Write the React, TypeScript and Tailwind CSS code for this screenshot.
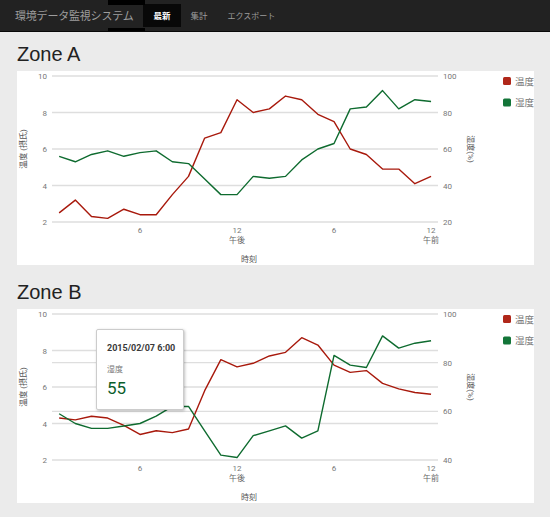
import React from 'react';

const RED = '#a8190c';
const GREEN = '#0e6b2f';
const FONT = "Roboto, 'Noto Sans CJK JP', sans-serif";

type Series = { left: number[]; right: number[]; rightMin: number; rightTicks: number[] };

const zoneA: Series = {
  left: [2.5, 3.2, 2.3, 2.2, 2.7, 2.4, 2.4, 3.5, 4.5, 6.6, 6.9, 8.7, 8.0, 8.2, 8.9, 8.7, 7.9, 7.5, 6.0, 5.7, 4.9, 4.9, 4.1, 4.5],
  right: [56, 53, 57, 59, 56, 58, 59, 53, 52, 43.5, 35, 35, 45, 44, 45, 54, 60, 63, 82, 83, 92, 82, 87, 86],
  rightMin: 20,
  rightTicks: [100, 80, 60, 40, 20],
};

const zoneB: Series = {
  left: [4.3, 4.2, 4.4, 4.3, 3.9, 3.4, 3.6, 3.5, 3.7, 5.8, 7.5, 7.1, 7.3, 7.7, 7.9, 8.7, 8.3, 7.2, 6.8, 6.9, 6.2, 5.9, 5.7, 5.6],
  right: [59, 55, 53, 53, 54, 55, 58, 62, 62, 52, 42, 41, 50, 52, 54, 49, 52, 83, 79, 78, 91, 86, 88, 89],
  rightMin: 40,
  rightTicks: [100, 80, 60, 40],
};

const TOP = 5;
const BOTTOM = 151;
const xAt = (h: number) => 123 + (h - 6) * 16.17;

function Chart({ data }: { data: Series }) {
  const leftY = (v: number) => BOTTOM - ((v - 2) / 8) * (BOTTOM - TOP);
  const rightY = (v: number) => BOTTOM - ((v - data.rightMin) / (100 - data.rightMin)) * (BOTTOM - TOP);
  const leftTicks = [10, 8, 6, 4, 2];
  const gridYs = Array.from(new Set([...leftTicks.map(leftY), ...data.rightTicks.map(rightY)].map((y) => Math.round(y * 10) / 10)));
  const redPts = data.left.map((v, i) => `${xAt(i + 1)},${leftY(v)}`).join(' ');
  const greenPts = data.right.map((v, i) => `${xAt(i + 1)},${rightY(v)}`).join(' ');

  return (
    <svg width="517" height="194" viewBox="0 0 517 194" fontFamily={FONT}>
      {gridYs.map((y) => (
        <line key={y} x1="35" x2="421" y1={y} y2={y} stroke="#dedede" strokeWidth="1.3" />
      ))}
      {leftTicks.map((t) => (
        <text key={t} x="30" y={leftY(t) + 3} fontSize="8" fill="#777" textAnchor="end">{t}</text>
      ))}
      {data.rightTicks.map((t) => (
        <text key={t} x="426" y={rightY(t) + 3} fontSize="8" fill="#777">{t}</text>
      ))}
      <text x="123" y="162" fontSize="8" fill="#777" textAnchor="middle">6</text>
      <text x="220" y="162" fontSize="8" fill="#777" textAnchor="middle">12</text>
      <text x="220" y="172" fontSize="8" fill="#666" textAnchor="middle">午後</text>
      <text x="317" y="162" fontSize="8" fill="#777" textAnchor="middle">6</text>
      <text x="414" y="162" fontSize="8" fill="#777" textAnchor="middle">12</text>
      <text x="414" y="172" fontSize="8" fill="#666" textAnchor="middle">午前</text>
      <text x="232" y="191" fontSize="8" fill="#555" textAnchor="middle">時刻</text>
      <text x="9" y="78" fontSize="8" fill="#555" textAnchor="middle" transform="rotate(-90 9 78)">温度 (摂氏)</text>
      <text x="451" y="78" fontSize="8" fill="#555" textAnchor="middle" transform="rotate(90 451 78)">湿度(%)</text>
      <polyline points={redPts} fill="none" stroke={RED} strokeWidth="1.4" strokeLinejoin="round" />
      <polyline points={greenPts} fill="none" stroke={GREEN} strokeWidth="1.4" strokeLinejoin="round" />
      <rect x="486" y="6" width="8" height="8" rx="1.5" fill="#b0271a" />
      <text x="498" y="13.5" fontSize="9.5" fill="#777">温度</text>
      <rect x="486" y="27.5" width="8" height="8" rx="1.5" fill="#137538" />
      <text x="498" y="35" fontSize="9.5" fill="#777">湿度</text>
    </svg>
  );
}

function Section({ title, data, tooltip }: { title: string; data: Series; tooltip?: boolean }) {
  return (
    <section className="flex flex-col">
      <h2 className="mt-[10px] mb-[5px] text-[20px] leading-[24px] text-[#222] font-['Liberation_Sans',Arial,sans-serif]">{title}</h2>
      <div className="relative w-[517px] h-[194px] mb-[5px] bg-white overflow-hidden">
        <Chart data={data} />
        {tooltip && (
          <div className="absolute left-[79px] top-[20px] w-[88px] h-[81px] bg-white border border-[#cccccc] rounded-[2px] shadow-[1px_1px_3px_rgba(0,0,0,0.25)] pl-[10px] pt-[13px] font-['Roboto','Noto_Sans_CJK_JP',sans-serif]">
            <div className="text-[9px] leading-[10px] font-bold text-[#3a3a3a]">2015/02/07 6:00</div>
            <div className="mt-[12px] text-[8px] leading-[10px] text-[#777]">湿度</div>
            <div className="mt-[3px] text-[17px] leading-[20px] text-[#0b5e2b]">55</div>
          </div>
        )}
      </div>
    </section>
  );
}

export default function App() {
  return (
    <div className="min-h-[517px] bg-[#ebebeb]">
      <header className="relative h-[32px] bg-[#222222] border-b border-[#080808] flex items-center pl-[15px] font-['Noto_Sans_CJK_JP',sans-serif]">
        <div className="absolute left-[108px] top-0 w-[37px] h-[31px] border-t-[5px] border-b-[3px] border-black" />
        <span className="relative text-[11px] text-[#9d9d9d] tracking-[-0.2px]">環境データ監視システム</span>
        <nav className="flex ml-[10px] h-[23px]">
          <span className="px-[10px] flex items-center bg-[#080808] text-white text-[8.5px] font-bold">最新</span>
          <span className="px-[10px] flex items-center text-[#9d9d9d] text-[8.5px]">集計</span>
          <span className="px-[10px] flex items-center text-[#9d9d9d] text-[8px]">エクスポート</span>
        </nav>
      </header>
      <main className="flex flex-col px-[17px] pb-[9px]">
        <Section title="Zone A" data={zoneA} />
        <Section title="Zone B" data={zoneB} tooltip />
      </main>
    </div>
  );
}
